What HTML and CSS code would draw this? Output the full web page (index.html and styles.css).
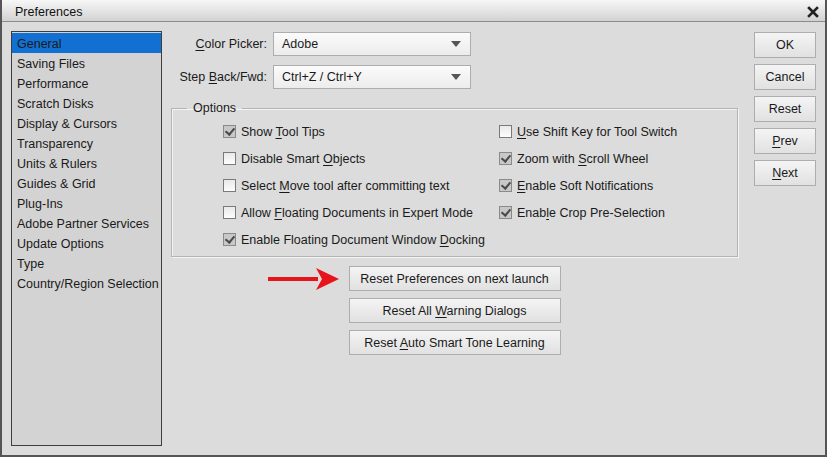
FILE: index.html
```html
<!DOCTYPE html>
<html>
<head>
<meta charset="utf-8">
<title>Preferences</title>
<link rel="stylesheet" href="styles.css">
</head>
<body>
<div class="window">
  <div class="titlebar">
    <span class="title">Preferences</span>
    <svg class="close" width="12" height="12" viewBox="0 0 12 12"><path d="M2 2 L10 10 M10 2 L2 10" stroke="#222" stroke-width="2.6" stroke-linecap="square"/></svg>
  </div>
  <div class="content">
    <ul class="list">
      <li class="sel">General</li>
      <li>Saving Files</li>
      <li>Performance</li>
      <li>Scratch Disks</li>
      <li>Display &amp; Cursors</li>
      <li>Transparency</li>
      <li>Units &amp; Rulers</li>
      <li>Guides &amp; Grid</li>
      <li>Plug-Ins</li>
      <li>Adobe Partner Services</li>
      <li>Update Options</li>
      <li>Type</li>
      <li>Country/Region Selection</li>
    </ul>
    <div class="main">
      <div class="field">
        <label class="flabel"><u>C</u>olor Picker:</label>
        <div class="select"><span>Adobe</span><i class="caret"></i></div>
      </div>
      <div class="field">
        <label class="flabel">Step <u>B</u>ack/Fwd:</label>
        <div class="select"><span>Ctrl+Z / Ctrl+Y</span><i class="caret"></i></div>
      </div>
      <fieldset class="options">
        <legend>Options</legend>
        <div class="cols">
          <div class="col">
            <div class="cb"><i class="box on"></i><span>Show <u>T</u>ool Tips</span></div>
            <div class="cb"><i class="box"></i><span>Disable Smart <u>O</u>bjects</span></div>
            <div class="cb"><i class="box"></i><span>Select <u>M</u>ove tool after committing text</span></div>
            <div class="cb"><i class="box"></i><span>Allow <u>F</u>loating Documents in Expert Mode</span></div>
            <div class="cb"><i class="box on"></i><span>Enable Floating Document Window <u>D</u>ocking</span></div>
          </div>
          <div class="col">
            <div class="cb"><i class="box"></i><span><u>U</u>se Shift Key for Tool Switch</span></div>
            <div class="cb"><i class="box on"></i><span>Zoom with <u>S</u>croll Wheel</span></div>
            <div class="cb"><i class="box on"></i><span><u>E</u>nable Soft Notifications</span></div>
            <div class="cb"><i class="box on"></i><span>Enab<u>l</u>e Crop Pre-Selection</span></div>
          </div>
        </div>
      </fieldset>
      <div class="resets">
        <svg class="arrow" width="72" height="24" viewBox="0 0 72 24"><rect x="0" y="10" width="50" height="4" fill="#e8141b"/><path d="M48 1 L71 12 L48 23 L54 12 Z" fill="#e8141b"/></svg>
        <button class="btn wide">Reset Preferences on next launch</button>
        <button class="btn wide">Reset All <u>W</u>arning Dialogs</button>
        <button class="btn wide">Reset <u>A</u>uto Smart Tone Learning</button>
      </div>
    </div>
    <div class="side">
      <button class="btn small">OK</button>
      <button class="btn small">Cancel</button>
      <button class="btn small">Reset</button>
      <button class="btn small"><u>P</u>rev</button>
      <button class="btn small"><u>N</u>ext</button>
    </div>
  </div>
</div>
</body>
</html>
```

FILE: styles.css
```css
* { box-sizing: border-box; }
html, body { margin: 0; padding: 0; }
body {
  font-family: "Liberation Sans", Arial, sans-serif;
  font-size: 12px;
  color: #1a1a1a;
  background: #dcdcdc;
}
u { text-decoration: underline; text-underline-offset: 2px; }
.window {
  width: 827px;
  height: 457px;
  background: #dcdcdc;
  border-left: 2px solid #555;
  border-right: 2px solid #555;
  border-bottom: 2px solid #555;
  display: flex;
  flex-direction: column;
}
.titlebar {
  height: 22px;
  background: linear-gradient(#f7f7f7, #d2d2d2);
  border-bottom: 1px solid #8c8c8c;
  display: flex;
  align-items: center;
  justify-content: space-between;
  padding: 3px 6px 0 13px;
}
.title { font-size: 12.5px; color: #111; }
.close { display: block; }
.content {
  flex: 1;
  display: flex;
  padding: 9px 9px 9px 9px;
}
.list {
  list-style: none;
  margin: 0;
  padding: 1px 0 0 0;
  width: 151px;
  height: 415px;
  background: #d3d3d3;
  border: 1px solid #3e3e3e;
  font-size: 12.5px;
}
.list li {
  height: 20px;
  line-height: 22px;
  padding-left: 5px;
  white-space: nowrap;
}
.list li.sel { background: #1170d2; }
.main {
  width: 567px;
  margin-left: 9px;
  padding-top: 1px;
  display: flex;
  flex-direction: column;
}
.field {
  display: flex;
  align-items: center;
  height: 24px;
  margin-bottom: 9px;
  font-size: 12.5px;
}
.flabel {
  width: 102px;
  text-align: right;
  padding-right: 6px;
  white-space: nowrap;
}
.select {
  width: 198px;
  height: 24px;
  border: 1px solid #adadad;
  background: linear-gradient(#fbfbfb, #ececec);
  display: flex;
  align-items: center;
  justify-content: space-between;
  padding: 0 9px 0 8px;
}
.caret {
  width: 0; height: 0;
  border-left: 5px solid transparent;
  border-right: 5px solid transparent;
  border-top: 6px solid #555;
}
.options {
  margin: 3px 0 0 0;
  padding: 3px 0 0 0;
  height: 156px;
  border: 1px solid #b4b4b4;
  box-shadow: inset 1px 1px 0 #f4f4f4, 1px 1px 0 #f4f4f4;
  font-size: 12.5px;
}
.options legend {
  margin-left: 15px;
  padding: 0 6px;
}
.cols { display: flex; }
.col:first-child { width: 327px; padding-left: 51px; }
.cb {
  height: 27px;
  display: flex;
  align-items: center;
  white-space: nowrap;
}
.box {
  width: 13px;
  height: 13px;
  margin-right: 5px;
  border: 1px solid #7a7a7a;
  background: linear-gradient(#e9e9e9, #fdfdfd);
  position: relative;
  flex: none;
}
.box.on {
  background: #c8c8c8;
  border-color: #8a8a8a;
}
.box.on::after {
  content: "";
  position: absolute;
  left: 3px; top: 0px;
  width: 4px; height: 7px;
  border-right: 2px solid #4a4a4a;
  border-bottom: 2px solid #4a4a4a;
  transform: rotate(40deg);
}
.resets {
  position: relative;
  display: flex;
  flex-direction: column;
  align-items: center;
  gap: 7px;
  margin-top: 9px;
}
.arrow { position: absolute; left: 97px; top: 1px; }
.btn {
  font-family: "Liberation Sans", Arial, sans-serif;
  font-size: 12.5px;
  color: #1a1a1a;
  border: 1px solid #adadad;
  background: linear-gradient(#f4f4f4, #e1e1e1);
  padding: 0;
  margin: 0;
}
.btn.wide { width: 212px; height: 25px; }
.side {
  margin-left: 16px;
  display: flex;
  flex-direction: column;
  gap: 6px;
  padding-top: 1px;
}
.btn.small { width: 62px; height: 26px; }
```
